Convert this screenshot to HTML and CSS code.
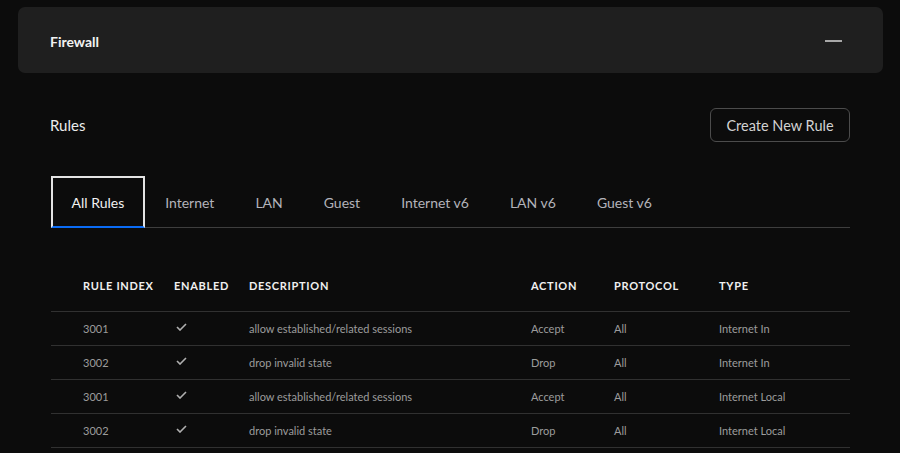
FILE: index.html
```html
<!DOCTYPE html>
<html>
<head>
<meta charset="utf-8">
<link rel="stylesheet" href="styles.css">
</head>
<body>
<div class="page">
  <div class="card">
    <div class="card-title">Firewall</div>
    <span class="minus"></span>
  </div>
  <div class="section">
    <div class="section-head">
      <div class="section-title">Rules</div>
      <button class="btn">Create New Rule</button>
    </div>
    <div class="tabs">
      <div class="tab active">All Rules</div>
      <div class="tab">Internet</div>
      <div class="tab">LAN</div>
      <div class="tab">Guest</div>
      <div class="tab">Internet v6</div>
      <div class="tab">LAN v6</div>
      <div class="tab">Guest v6</div>
    </div>
    <div class="table">
      <div class="row head">
        <div>Rule Index</div><div>Enabled</div><div>Description</div><div>Action</div><div>Protocol</div><div>Type</div>
      </div>
      <div class="row">
        <div>3001</div><div><svg class="check" viewBox="0 0 11 8"><path d="M1 4l3 3 6-6" /></svg></div><div>allow established/related sessions</div><div>Accept</div><div>All</div><div>Internet In</div>
      </div>
      <div class="row">
        <div>3002</div><div><svg class="check" viewBox="0 0 11 8"><path d="M1 4l3 3 6-6" /></svg></div><div>drop invalid state</div><div>Drop</div><div>All</div><div>Internet In</div>
      </div>
      <div class="row">
        <div>3001</div><div><svg class="check" viewBox="0 0 11 8"><path d="M1 4l3 3 6-6" /></svg></div><div>allow established/related sessions</div><div>Accept</div><div>All</div><div>Internet Local</div>
      </div>
      <div class="row">
        <div>3002</div><div><svg class="check" viewBox="0 0 11 8"><path d="M1 4l3 3 6-6" /></svg></div><div>drop invalid state</div><div>Drop</div><div>All</div><div>Internet Local</div>
      </div>
    </div>
  </div>
</div>
</body>
</html>
```

FILE: styles.css
```css
html, body {
  margin: 0;
  padding: 0;
  background: #0c0c0c;
  font-family: Lato, "Open Sans", sans-serif;
  color: #e8e8e8;
  overflow: hidden;
}
.page {
  padding: 7px 17px 0 18px;
}
.card {
  height: 66px;
  background: #1f1f1f;
  border-radius: 7px;
  display: flex;
  align-items: center;
  justify-content: space-between;
  padding: 0 41px 0 32px;
  box-sizing: border-box;
}
.card-title {
  font-size: 14px;
  font-weight: 700;
  color: #f2f2f2;
  margin-top: 2px;
}
.minus {
  display: block;
  width: 17px;
  height: 2px;
  background: #a8a8a8;
  margin-top: 1px;
}
.section {
  padding: 0 33px;
}
.section-head {
  margin-top: 35px;
  height: 34px;
  display: flex;
  align-items: center;
  justify-content: space-between;
}
.section-title {
  font-size: 15px;
  color: #ececec;
  margin-left: -1px;
  margin-top: -1px;
}
.btn {
  height: 34px;
  width: 140px;
  background: transparent;
  border: 1px solid #4c4c4c;
  border-radius: 6px;
  color: #d2d2d2;
  font-family: Lato, "Open Sans", sans-serif;
  font-size: 14.5px;
  padding: 0;
}
.tabs {
  margin-top: 34px;
  display: flex;
  border-bottom: 1px solid #3e3e3e;
}
.tab {
  height: 51px;
  box-sizing: border-box;
  padding: 0 19.5px;
  display: flex;
  align-items: center;
  font-size: 14px;
  color: #b3b3ba;
  border: 1px solid transparent;
  border-bottom: none;
}
.tab.active {
  color: #f2f2f2;
  border: 2px solid #e4e4e4;
  border-bottom: 2px solid #0b6cf5;
  margin-bottom: -1px;
  height: 52px;
  padding: 0 18.5px;
}
.table {
  margin-top: 33px;
}
.row {
  display: grid;
  grid-template-columns: 91px 75px 282px 83px 105px 1fr;
  padding-left: 32px;
  height: 34px;
  box-sizing: border-box;
  align-items: center;
  border-bottom: 1px solid #313131;
  font-size: 11px;
  color: #9c9c9c;
}
.row.head {
  height: 51px;
  font-weight: 700;
  text-transform: uppercase;
  letter-spacing: 0.7px;
  color: #f0f0f0;
  padding-bottom: 1px;
}
.check {
  width: 11px;
  height: 8px;
  margin-left: 2px;
  display: block;
  margin-top: -3px;
  fill: none;
  stroke: #b0b0b0;
  stroke-width: 1.6;
}
```
